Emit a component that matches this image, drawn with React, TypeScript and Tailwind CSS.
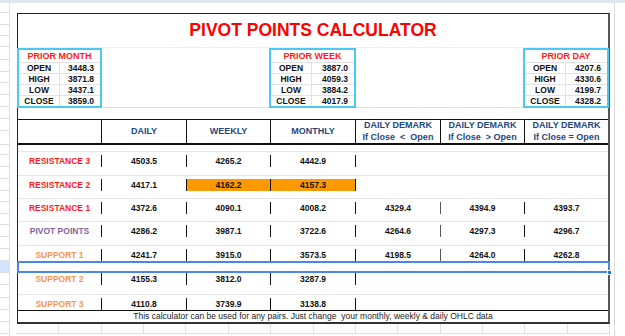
import React from "react";

const COLS = "grid grid-cols-[83px_85px_84px_85px_85px_84px_84px]";

type Row = {
  label: string;
  color: string;
  d: string;
  w: string;
  m: string;
  dm: [string, string, string] | null;
  orange?: boolean;
  spacer: string;
  selected?: boolean;
};

const rows: Row[] = [
  { label: "RESISTANCE 3", color: "text-[#ff1a1a]", d: "4503.5", w: "4265.2", m: "4442.9", dm: null, spacer: "h-[10px]" },
  { label: "RESISTANCE 2", color: "text-[#ff1a1a]", d: "4417.1", w: "4162.2", m: "4157.3", dm: null, orange: true, spacer: "h-[12px]" },
  { label: "RESISTANCE 1", color: "text-[#ff1a1a]", d: "4372.6", w: "4090.1", m: "4008.2", dm: ["4329.4", "4394.9", "4393.7"], spacer: "h-[11px]" },
  { label: "PIVOT POINTS", color: "text-[#8064a2]", d: "4286.2", w: "3987.1", m: "3722.6", dm: ["4264.6", "4297.3", "4296.7"], spacer: "h-[11px]" },
  { label: "SUPPORT 1", color: "text-[#f79646]", d: "4241.7", w: "3915.0", m: "3573.5", dm: ["4198.5", "4264.0", "4262.8"], spacer: "h-[12px]" },
  { label: "SUPPORT 2", color: "text-[#f79646]", d: "4155.3", w: "3812.0", m: "3287.9", dm: null, spacer: "h-[12px]", selected: true },
  { label: "SUPPORT 3", color: "text-[#f79646]", d: "4110.8", w: "3739.9", m: "3138.8", dm: null, spacer: "h-[13px]" },
];

const leftHeights = [
  "h-[10px]", "h-[12px]", "h-[11px]", "h-[11px]", "h-[13px]", "h-[12px]", "h-[11px]", "h-[12px]",
  "h-[12px]", "h-[12px]", "h-[12px]", "h-[14px]", "h-[10px]", "h-[12px]", "h-[12px]", "h-[12px]",
  "h-[11px]", "h-[12px]", "h-[11px]", "h-[12px]", "h-[12px]", "h-[12px]", "h-[12px]", "h-[12px]",
  "h-[13px]", "h-[12px]", "h-[12px]", "h-[12px]", "h-[12px]",
];

function PriorBox({ title, data }: { title: string; data: [string, string][] }) {
  return (
    <div className="-mx-px border-2 border-[#4cc8f2] bg-white flex flex-col">
      <div className="h-[12px] flex items-center justify-center text-[9px] font-bold text-[#ff1a1a] leading-none">
        {title}
      </div>
      {data.map(([k, v]) => (
        <div key={k} className="h-[11px] grid grid-cols-[41px_1fr] border-t border-[#e2e2e2]">
          <div className="flex items-center justify-center border-r border-[#e2e2e2] text-[8.5px] font-bold text-[#111] leading-none">
            {k}
          </div>
          <div className="flex items-center justify-end pr-[6px] text-[8.5px] font-bold text-[#111] leading-none">
            {v}
          </div>
        </div>
      ))}
    </div>
  );
}

function Cell({ children, className = "" }: { children?: React.ReactNode; className?: string }) {
  return (
    <div className={`flex items-center justify-center text-[8.5px] font-bold leading-none text-[#111] ${className}`}>
      {children}
    </div>
  );
}

export default function App() {
  return (
    <div className="w-[625px] h-[336px] bg-white overflow-hidden font-['Liberation_Sans',Arial,sans-serif]">
      <div className="h-[3px] bg-[#e1e6ee]" />
      <div className="flex">
        {/* left strip */}
        <div className="w-[17px] flex flex-col">
          {leftHeights.map((h, i) => (
            <div
              key={i}
              className={`${h} w-[10px] shrink-0 border-r border-b border-[#e0e0e0] ${i === 22 ? "bg-[#d3e3fd]" : ""}`}
            />
          ))}
        </div>

        {/* middle */}
        <div className="w-[593px] flex flex-col">
          <div className="h-[10px]" />
          <div className="border-t border-l border-r-2 border-b-2 border-t-[#222] border-l-[#222] border-r-[#555] border-b-[#333] bg-white">
            {/* title */}
            <div className="h-[33px] flex items-center justify-center text-[17.5px] font-bold text-[#ff0000] leading-none">
              PIVOT POINTS CALCULATOR
            </div>
            {/* prior boxes */}
            <div className={`${COLS} h-[60px] border-t border-[#efefef]`}>
              <PriorBox
                title="PRIOR MONTH"
                data={[["OPEN", "3448.3"], ["HIGH", "3871.8"], ["LOW", "3437.1"], ["CLOSE", "3859.0"]]}
              />
              <div />
              <div />
              <PriorBox
                title="PRIOR WEEK"
                data={[["OPEN", "3887.0"], ["HIGH", "4059.3"], ["LOW", "3884.2"], ["CLOSE", "4017.9"]]}
              />
              <div />
              <div />
              <PriorBox
                title="PRIOR DAY"
                data={[["OPEN", "4207.6"], ["HIGH", "4330.6"], ["LOW", "4199.7"], ["CLOSE", "4328.2"]]}
              />
            </div>
            <div className="h-[12px] border-t border-[#e2e2e2]" />
            {/* header */}
            <div className={`${COLS} h-[26px] border-t border-b-2 border-t-[#111] border-b-[#111]`}>
              <div />
              {["DAILY", "WEEKLY", "MONTHLY"].map((t) => (
                <div key={t} className="flex items-center justify-center border-l border-[#111] text-[9px] font-bold text-[#1f497d] leading-none">
                  {t}
                </div>
              ))}
              {["If Close  <  Open", "If Close  > Open", "If Close = Open"].map((t) => (
                <div key={t} className="flex flex-col items-center justify-center gap-[3px] border-l border-[#111] text-[9px] font-bold text-[#1f497d] leading-none">
                  <span>DAILY DEMARK</span>
                  <span className="whitespace-pre">{t}</span>
                </div>
              ))}
            </div>
            {/* data rows */}
            {rows.map((r) => (
              <React.Fragment key={r.label}>
                {r.selected ? (
                  <div className={`${r.spacer} relative`}>
                    <div className="absolute -left-px -right-[2px] top-0 bottom-0 border-2 border-[#4a86e8]" />
                    <div className="absolute -right-[4px] -bottom-[2px] w-[5px] h-[5px] bg-[#1a73e8] border border-white" />
                  </div>
                ) : (
                  <div className={`${r.spacer} flex flex-col justify-end pb-[3px]`}>
                    <div className="h-px bg-[#e6e6e6]" />
                  </div>
                )}
                <div className={`${COLS} h-[12px]`}>
                  <Cell className={r.color}>{r.label}</Cell>
                  <Cell className="border-l border-[#111]">{r.d}</Cell>
                  <Cell className={`border-l border-[#111] ${r.orange ? "bg-[#ff9900]" : ""}`}>{r.w}</Cell>
                  <Cell className={`border-l border-[#111] ${r.orange ? "bg-[#ff9900]" : ""}`}>{r.m}</Cell>
                  <Cell className="border-l border-[#111]">{r.dm ? r.dm[0] : ""}</Cell>
                  <Cell className={r.dm ? "border-l border-[#555]" : ""}>{r.dm ? r.dm[1] : ""}</Cell>
                  <Cell className={r.dm ? "border-l border-[#111]" : ""}>{r.dm ? r.dm[2] : ""}</Cell>
                </div>
              </React.Fragment>
            ))}
            {/* footer */}
            <div className="h-[12px] border-t border-[#111] flex items-center justify-center text-[8.5px] text-[#222] leading-none whitespace-pre">
              {"This calculator can be used for any pairs. Just change  your monthly, weekly & daily OHLC data"}
            </div>
          </div>
          {/* spreadsheet gridlines below */}
          <div className="grid grid-cols-14 h-[10px] border-b border-[#e0e0e0]">
            {Array.from({ length: 14 }).map((_, i) => (
              <div key={i} className="border-r border-[#e0e0e0]" />
            ))}
          </div>
        </div>

        {/* right strip */}
        <div className="w-[15px] h-[333px]">
          <div className="ml-[4px] h-full border-l border-[#dcdcdc]" />
        </div>
      </div>
    </div>
  );
}
